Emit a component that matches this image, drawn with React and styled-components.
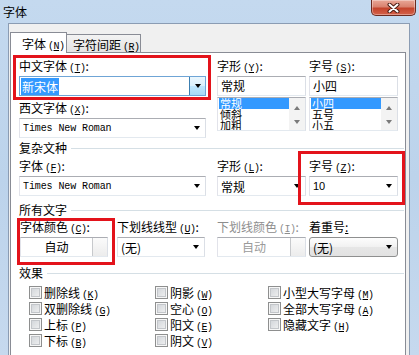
import React from 'react';
import styled, { createGlobalStyle, css } from 'styled-components';

const GlobalStyle = createGlobalStyle`
  html, body {
    margin: 0;
    padding: 0;
    background: #fff;
  }
  body {
    font-family: "Noto Sans CJK SC", "Noto Sans", sans-serif;
    font-size: 12px;
    color: #000;
  }
`;

const Window = styled.div`
  width: 419px;
  height: 355px;
  overflow: hidden;
  display: flex;
  flex-direction: column;
  background: linear-gradient(to bottom, #c4d9ef 0%, #bcd3eb 50%, #c6d9ee 100%);
`;

const TitleBar = styled.div`
  height: 23px;
  flex: none;
  display: flex;
  justify-content: space-between;
  align-items: flex-start;
  padding-left: 3px;
`;

const Title = styled.span`
  line-height: 24px;
  font-size: 12px;
`;

const CloseButton = styled.div`
  width: 45px;
  height: 16px;
  margin-right: 3px;
  box-sizing: border-box;
  border: 1px solid #6b2a1f;
  border-top: none;
  border-radius: 0 0 5px 5px;
  background: linear-gradient(to bottom, #e9a797 0%, #d9826f 45%, #c4442c 55%, #d4614a 100%);
  box-shadow: inset 0 0 0 1px rgba(255, 255, 255, 0.35);
  display: flex;
  align-items: center;
  justify-content: center;
`;

const Frame = styled.div`
  flex: 1;
  min-height: 0;
  display: flex;
  padding: 0 9px 0 8px;
`;

const Client = styled.div`
  flex: 1;
  display: flex;
  flex-direction: column;
  background: #f0f0f0;
  border: 1px solid #8b9cb3;
  border-bottom: none;
  padding: 8px 3px 0 1px;
`;

const TabStrip = styled.div`
  display: flex;
  align-items: flex-end;
  height: 20px;
  position: relative;
  z-index: 1;
`;

const Tab = styled.div`
  box-sizing: border-box;
  border: 1px solid #898c95;
  border-bottom: none;
  white-space: nowrap;
  ${({ $active }) =>
    $active
      ? css`
          width: 57px;
          height: 21px;
          margin-bottom: -1px;
          background: #fff;
          padding: 2px 0 0 11px;
        `
      : css`
          width: 75px;
          height: 18px;
          margin-left: -1px;
          background: linear-gradient(to bottom, #f3f3f3, #e3e3e3);
          padding: 1px 0 0 6px;
        `}
`;

const Panel = styled.div`
  flex: 1;
  background: #fff;
  border: 1px solid #898c95;
  border-bottom: none;
  padding: 6px 1px 0 8px;
`;

const Key = styled.span`
  font-family: "Liberation Mono", monospace;
  font-size: 10px;
  margin-left: 2px;
  letter-spacing: -0.5px;
`;

const Row = styled.div`
  display: flex;
  align-items: flex-start;
  margin-top: ${({ $mt }) => $mt || 0}px;
`;

const Column = styled.div`
  display: flex;
  flex-direction: column;
  gap: 5px;
`;

const Field = styled.div`
  position: relative;
  flex: none;
  display: flex;
  flex-direction: column;
  gap: 3px;
  width: ${({ $w }) => $w}px;
  margin-left: ${({ $ml }) => $ml || 0}px;

  ${({ $mark }) =>
    $mark &&
    css`
      &::after {
        content: '';
        position: absolute;
        top: -${$mark[0]}px;
        right: -${$mark[1]}px;
        bottom: -${$mark[2]}px;
        left: -${$mark[3]}px;
        border: 3px solid #e3131b;
        pointer-events: none;
      }
    `}
`;

const Label = styled.div`
  height: 14px;
  line-height: 14px;
  white-space: nowrap;
  color: ${({ $disabled }) => ($disabled ? '#8d8d8d' : '#000')};
`;

const GroupHeader = styled.div`
  display: flex;
  align-items: center;
  gap: 4px;
  height: 14px;
  line-height: 14px;
  margin-top: ${({ $mt }) => $mt}px;

  &::after {
    content: '';
    flex: 1;
    height: 1px;
    background: #d5dfe5;
  }
`;

const boxBorder = css`
  box-sizing: border-box;
  border: 1px solid;
  border-color: #abadb3 #dbdfe6 #e3e9ef #e2e3ea;
`;

const Combo = styled.div`
  ${boxBorder};
  height: 20px;
  display: flex;
  align-items: center;
  background: #fff;
  padding-left: 3px;
  ${({ $focus }) =>
    $focus &&
    css`
      border-color: #6fa5d6;
      padding-left: 1px;
    `}
  ${({ $button }) =>
    $button &&
    css`
      border: 1px solid #8e8f8f;
      border-radius: 3px;
      background: linear-gradient(to bottom, #fdfdfd 0%, #f1f1f1 50%, #e6e6e6 51%, #e2e2e2 100%);
    `}
`;

const ComboText = styled.span`
  flex: 1;
  white-space: nowrap;
  overflow: hidden;
  ${({ $mono }) =>
    $mono &&
    css`
      font-family: "Liberation Mono", monospace;
      font-size: 10px;
      letter-spacing: -0.1px;
    `}
  ${({ $latin }) =>
    $latin &&
    css`
      font-family: "Liberation Sans", sans-serif;
      font-size: 11px;
    `}
`;

const Selected = styled.span`
  background: #3399ff;
  color: #fff;
  padding: 0 1px;
  line-height: 15px;
`;

const Arrow = styled.span`
  flex: none;
  width: 0;
  height: 0;
  border-left: 3.5px solid transparent;
  border-right: 3.5px solid transparent;
  border-top: 4px solid #000;
  margin-right: ${({ $mr }) => ($mr === undefined ? 5 : $mr)}px;
`;

const DropButton = styled.span`
  flex: none;
  align-self: stretch;
  width: 16px;
  box-sizing: border-box;
  border-left: 1px solid #3c7fb1;
  background: linear-gradient(to bottom, #eaf6fd 0%, #d9f0fc 50%, #bee6fd 51%, #a7d9f5 100%);
  display: flex;
  align-items: center;
  justify-content: center;
`;

const TextBox = styled.div`
  ${boxBorder};
  height: 20px;
  padding-left: 3px;
  line-height: 18px;
  background: #fff;
`;

const ListBox = styled.div`
  ${boxBorder};
  height: 34px;
  margin-top: -2px;
  display: flex;
  background: #fff;
`;

const ListItems = styled.div`
  flex: 1;
  overflow: hidden;
  padding-left: 1px;
`;

const ListItem = styled.div`
  height: 11px;
  line-height: 11px;
  font-size: 11px;
  padding-left: 1px;
  ${({ $selected }) =>
    $selected &&
    css`
      background: #3399ff;
      color: #fff;
    `}
`;

const ScrollBar = styled.div`
  flex: none;
  width: 16px;
  background: #f3f3f3;
  display: flex;
  flex-direction: column;
  align-items: center;
  justify-content: space-between;
  padding: 8px 0 6px;
  box-sizing: border-box;
`;

const ScrollArrow = styled.span`
  width: 0;
  height: 0;
  border-left: 3.5px solid transparent;
  border-right: 3.5px solid transparent;
  ${({ $up }) =>
    $up
      ? css`border-bottom: 4px solid #7a7a7a;`
      : css`border-top: 4px solid #7a7a7a;`}
`;

const ColorButton = styled.div`
  ${boxBorder};
  height: 20px;
  display: flex;
  background: #fff;
  color: ${({ $disabled }) => ($disabled ? '#9a9a9a' : '#000')};
`;

const ColorText = styled.span`
  flex: 1;
  text-align: center;
  line-height: 18px;
`;

const Swatch = styled.span`
  flex: none;
  width: 15px;
  box-sizing: border-box;
  border-left: 1px solid #c7c9cc;
  background: linear-gradient(to bottom, #fbfbfb, #ececec);
`;

const CheckGrid = styled.div`
  display: grid;
  grid-template-columns: 126px 113px 1fr;
  grid-template-rows: repeat(4, 16px);
  grid-auto-flow: column;
  margin: 4px 0 0 10px;
`;

const CheckItem = styled.div`
  display: flex;
  align-items: center;
  gap: 2px;
  white-space: nowrap;
`;

const CheckBox = styled.span`
  flex: none;
  width: 13px;
  height: 13px;
  box-sizing: border-box;
  border: 1px solid #8e8f8f;
  background: linear-gradient(135deg, #cdd1d6 0%, #f4f4f4 100%);
  box-shadow: inset 0 0 0 1px #f7f7f7, inset 0 0 0 2px #c3c6ca;
`;

const Accel = ({ k }) => (
  <Key>
    (<u>{k}</u>)
  </Key>
);

const checks = [
  ['删除线', 'K'],
  ['双删除线', 'G'],
  ['上标', 'P'],
  ['下标', 'B'],
  ['阴影', 'W'],
  ['空心', 'O'],
  ['阳文', 'E'],
  ['阴文', 'V'],
  ['小型大写字母', 'M'],
  ['全部大写字母', 'A'],
  ['隐藏文字', 'H'],
];

const StyleList = ({ items }) => (
  <ListBox>
    <ListItems>
      {items.map((item, i) => (
        <ListItem key={item} $selected={i === 0}>
          {item}
        </ListItem>
      ))}
    </ListItems>
    <ScrollBar>
      <ScrollArrow $up />
      <ScrollArrow />
    </ScrollBar>
  </ListBox>
);

const App = () => (
  <>
    <GlobalStyle />
    <Window>
      <TitleBar>
        <Title>字体</Title>
        <CloseButton>
          <svg width="13" height="10" viewBox="0 0 13 10">
            <path d="M2.5 1.5 L10.5 8.5 M10.5 1.5 L2.5 8.5" stroke="#4a1b12" strokeWidth="4" strokeLinecap="round" />
            <path d="M2.5 1.5 L10.5 8.5 M10.5 1.5 L2.5 8.5" stroke="#fff" strokeWidth="2" strokeLinecap="round" />
          </svg>
        </CloseButton>
      </TitleBar>
      <Frame>
        <Client>
          <TabStrip>
            <Tab $active>
              字体<Accel k="N" />
            </Tab>
            <Tab>
              字符间距<Accel k="R" />
            </Tab>
          </TabStrip>
          <Panel>
            <Row>
              <Column>
                <Field $w={187} $mark={[4, 5, 4, 6]}>
                  <Label>
                    中文字体<Accel k="T" />:
                  </Label>
                  <Combo $focus>
                    <ComboText>
                      <Selected>新宋体</Selected>
                    </ComboText>
                    <DropButton>
                      <Arrow $mr={0} />
                    </DropButton>
                  </Combo>
                </Field>
                <Field $w={187}>
                  <Label>
                    西文字体<Accel k="X" />:
                  </Label>
                  <Combo>
                    <ComboText $mono>Times New Roman</ComboText>
                    <Arrow />
                  </Combo>
                </Field>
              </Column>
              <Field $w={89} $ml={11}>
                <Label>
                  字形<Accel k="Y" />:
                </Label>
                <TextBox>常规</TextBox>
                <StyleList items={['常规', '倾斜', '加粗']} />
              </Field>
              <Field $w={89} $ml={3}>
                <Label>
                  字号<Accel k="S" />:
                </Label>
                <TextBox>小四</TextBox>
                <StyleList items={['小四', '五号', '小五']} />
              </Field>
            </Row>

            <GroupHeader $mt={3}>复杂文种</GroupHeader>
            <Row $mt={4}>
              <Field $w={187}>
                <Label>
                  字体<Accel k="F" />:
                </Label>
                <Combo>
                  <ComboText $mono>Times New Roman</ComboText>
                  <Arrow />
                </Combo>
              </Field>
              <Field $w={89} $ml={11}>
                <Label>
                  字形<Accel k="L" />:
                </Label>
                <Combo>
                  <ComboText>常规</ComboText>
                  <Arrow />
                </Combo>
              </Field>
              <Field $w={89} $ml={3} $mark={[8, 7, 9, 11]}>
                <Label>
                  字号<Accel k="Z" />:
                </Label>
                <Combo>
                  <ComboText $latin>10</ComboText>
                  <Arrow />
                </Combo>
              </Field>
            </Row>

            <GroupHeader $mt={7}>所有文字</GroupHeader>
            <Row $mt={3}>
              <Field $w={88} $ml={1} $mark={[2, 7, 8, 3]}>
                <Label>
                  字体颜色<Accel k="C" />:
                </Label>
                <ColorButton>
                  <ColorText>自动</ColorText>
                  <Swatch />
                </ColorButton>
              </Field>
              <Field $w={88} $ml={9}>
                <Label>
                  下划线线型<Accel k="U" />:
                </Label>
                <Combo>
                  <ComboText>(无)</ComboText>
                  <Arrow />
                </Combo>
              </Field>
              <Field $w={89} $ml={12}>
                <Label $disabled>
                  下划线颜色<Accel k="I" />:
                </Label>
                <ColorButton $disabled>
                  <ColorText>自动</ColorText>
                  <Swatch />
                </ColorButton>
              </Field>
              <Field $w={89} $ml={3}>
                <Label>
                  着重号<u>:</u>
                </Label>
                <Combo $button>
                  <ComboText>(无)</ComboText>
                  <Arrow />
                </Combo>
              </Field>
            </Row>

            <GroupHeader $mt={9}>效果</GroupHeader>
            <CheckGrid>
              {checks.map(([text, k]) => (
                <CheckItem key={k}>
                  <CheckBox />
                  <span>
                    {text}
                    <Accel k={k} />
                  </span>
                </CheckItem>
              ))}
            </CheckGrid>
          </Panel>
        </Client>
      </Frame>
    </Window>
  </>
);

export default App;
